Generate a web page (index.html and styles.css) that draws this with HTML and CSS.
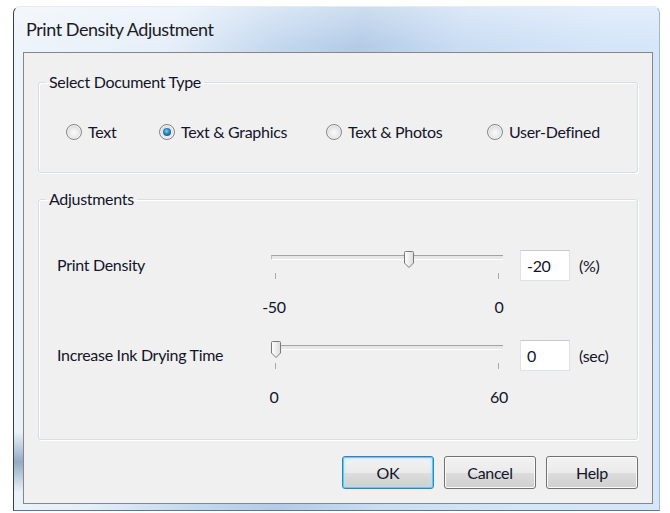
FILE: index.html
```html
<!DOCTYPE html>
<html lang="en">
<head>
<meta charset="utf-8">
<title>Print Density Adjustment</title>
<link rel="stylesheet" href="styles.css">
</head>
<body>
<div class="window">
  <div class="titlebar">Print Density Adjustment</div>
  <div class="client">
    <fieldset class="group">
      <legend>Select Document Type</legend>
      <div class="radios">
        <label class="radio"><span class="dot"></span>Text</label>
        <label class="radio checked"><span class="dot"></span>Text &amp; Graphics</label>
        <label class="radio"><span class="dot"></span>Text &amp; Photos</label>
        <label class="radio"><span class="dot"></span>User-Defined</label>
      </div>
    </fieldset>

    <fieldset class="group group-adjust">
      <legend>Adjustments</legend>
      <div class="settings">
        <div class="setting">
          <span class="setting-label">Print Density</span>
          <div class="slider">
            <div class="track">
              <div class="groove"></div>
              <div class="rail">
                <svg class="thumb" style="left:60%" width="10" height="17" viewBox="0 0 10 17">
                  <defs>
                    <linearGradient id="thumbFillA" x1="0" y1="0" x2="1" y2="0">
                      <stop offset="0" stop-color="#ffffff"/>
                      <stop offset="1" stop-color="#dcdcdc"/>
                    </linearGradient>
                  </defs>
                  <path d="M1.5 0.5h7a1 1 0 0 1 1 1v10.5l-4.5 4.5l-4.5-4.5v-10.5a1 1 0 0 1 1-1z" fill="url(#thumbFillA)" stroke="#7a7a7a"/>
                </svg>
              </div>
            </div>
            <div class="ticks"><i></i><i></i></div>
            <div class="scale"><span>-50</span><span>0</span></div>
          </div>
          <div class="field">-20</div>
          <span class="unit">(%)</span>
        </div>

        <div class="setting">
          <span class="setting-label">Increase Ink Drying Time</span>
          <div class="slider">
            <div class="track">
              <div class="groove"></div>
              <div class="rail">
                <svg class="thumb" style="left:0%" width="10" height="17" viewBox="0 0 10 17">
                  <defs>
                    <linearGradient id="thumbFillB" x1="0" y1="0" x2="1" y2="0">
                      <stop offset="0" stop-color="#ffffff"/>
                      <stop offset="1" stop-color="#dcdcdc"/>
                    </linearGradient>
                  </defs>
                  <path d="M1.5 0.5h7a1 1 0 0 1 1 1v10.5l-4.5 4.5l-4.5-4.5v-10.5a1 1 0 0 1 1-1z" fill="url(#thumbFillB)" stroke="#7a7a7a"/>
                </svg>
              </div>
            </div>
            <div class="ticks"><i></i><i></i></div>
            <div class="scale"><span>0</span><span>60</span></div>
          </div>
          <div class="field">0</div>
          <span class="unit">(sec)</span>
        </div>
      </div>
    </fieldset>

    <div class="buttons">
      <button class="btn btn-default" type="button">OK</button>
      <button class="btn" type="button">Cancel</button>
      <button class="btn" type="button">Help</button>
    </div>
  </div>
</div>
</body>
</html>
```
FILE: styles.css
```css
* {
  box-sizing: border-box;
}

body {
  margin: 0;
  background: #ffffff;
  font-family: Lato, "Liberation Sans", sans-serif;
  font-size: 16px;
  letter-spacing: -0.3px;
  color: #14142a;
}

/* Aero-style window frame */
.window {
  margin: 6px 0 0 13px;
  width: 647px;
  height: 505px;
  padding: 0 6px 6px 9px;
  border-left: 1px solid #3e3e3e;
  border-top: 1px solid #e3ebf3;
  border-right: 1px solid #9fb8d2;
  border-bottom: 1px solid #5d7591;
  border-radius: 7px 7px 0 0;
  background:
    linear-gradient(to bottom, transparent 425px, rgba(60, 100, 145, 0.5) 455px, transparent 485px) left top / 9px 100% no-repeat,
    linear-gradient(to bottom, rgba(255, 255, 255, 0.35), rgba(255, 255, 255, 0) 40px),
    linear-gradient(100deg, #eef4fb 0%, #e6eff9 22%, #c4d9ef 36%, #b3cbe7 48%, #c9ddf3 62%, #d3e5f8 80%, #d6e7f9 100%);
}

.titlebar {
  height: 44px;
  display: flex;
  align-items: center;
  padding-left: 3px;
  font-size: 18px;
  letter-spacing: -0.45px;
  color: #1b1b24;
  margin-bottom: 1px;
}

.client {
  height: 452px;
  border: 1px solid #868686;
  background: #f0f0f0;
  padding: 0 14px 13px;
  display: flex;
  flex-direction: column;
}

/* Group boxes */
.group {
  margin: 19px 0 0;
  padding: 0;
  min-width: 0;
  border: 1px solid #d5dfe5;
  border-radius: 3px;
  box-shadow: inset 1px 1px 0 #ffffff, 1px 1px 0 #ffffff;
}

.group legend {
  margin-left: 7px;
  padding: 0 3px;
  line-height: 20px;
}

.group-adjust {
  margin-top: 16px;
}

/* Document type radios */
.radios {
  display: grid;
  grid-template-columns: 93px 167px 161px auto;
  padding: 30px 0 30px 27px;
}

.radio {
  display: flex;
  align-items: center;
  gap: 6px;
  height: 20px;
  line-height: 20px;
}

.dot {
  width: 16px;
  height: 16px;
  border-radius: 50%;
  border: 1px solid #85878a;
  background: radial-gradient(circle at 50% 55%, #fafafa 0, #ececec 40%, #bdbdbd 100%);
  box-shadow: inset 0 0 0 1px #f4f4f4;
  flex: none;
  display: flex;
  align-items: center;
  justify-content: center;
}

.radio.checked .dot::after {
  content: "";
  width: 8px;
  height: 8px;
  border-radius: 50%;
  background: radial-gradient(circle at 45% 40%, #7fd0f5 0, #2a86c2 40%, #0d3d68 100%);
}

/* Adjustment rows */
.settings {
  padding: 41px 0 9px 18px;
}

.setting {
  display: flex;
  align-items: flex-start;
  height: 90px;
}

.setting-label {
  width: 214px;
  margin-top: 5px;
  line-height: 20px;
}

.slider {
  width: 232px;
  margin-top: 1px;
}

.track {
  position: relative;
  height: 17px;
}

.groove {
  position: absolute;
  left: 0;
  right: 0;
  top: 4px;
  height: 5px;
  border-top: 1px solid #a3a3a3;
  border-left: 1px solid #bdbdbd;
  border-bottom: 1px solid #ffffff;
  background: #e7e7e7;
}

.rail {
  position: absolute;
  left: 0;
  right: 10px;
  top: 0;
  bottom: 0;
}

.thumb {
  position: absolute;
  top: 0;
  display: block;
}

.ticks {
  display: flex;
  justify-content: space-between;
  padding: 0 4px;
  margin-top: 5px;
  height: 6px;
}

.ticks i {
  width: 1px;
  height: 6px;
  background: #a9a9a9;
}

.scale {
  display: flex;
  justify-content: space-between;
  margin: 18px -11px 0 -12px;
  line-height: 20px;
}

.scale span {
  width: 30px;
  text-align: center;
}

.field {
  margin-left: 17px;
  width: 50px;
  height: 31px;
  border: 1px solid #dde2e8;
  border-top-color: #c6cad0;
  background: #ffffff;
  padding-left: 6px;
  line-height: 29px;
}

.unit {
  margin-left: 9px;
  margin-top: 6px;
  line-height: 20px;
}

/* Dialog buttons */
.buttons {
  display: flex;
  justify-content: flex-end;
  gap: 10px;
  margin-top: 16px;
}

.btn {
  width: 92px;
  height: 33px;
  padding: 0;
  font: inherit;
  letter-spacing: inherit;
  color: #14142a;
  line-height: 31px;
  border: 1px solid #707070;
  border-radius: 3px;
  background: linear-gradient(#f2f2f2 0%, #ebebeb 50%, #dddddd 50%, #cfcfcf 100%);
  box-shadow: inset 0 0 0 1px #fbfbfb;
}

.btn-default {
  border-color: #3c7fb1;
  box-shadow: inset 0 0 0 1px #48d6fb, inset 0 0 3px 1px #a6e6fb;
}
```
